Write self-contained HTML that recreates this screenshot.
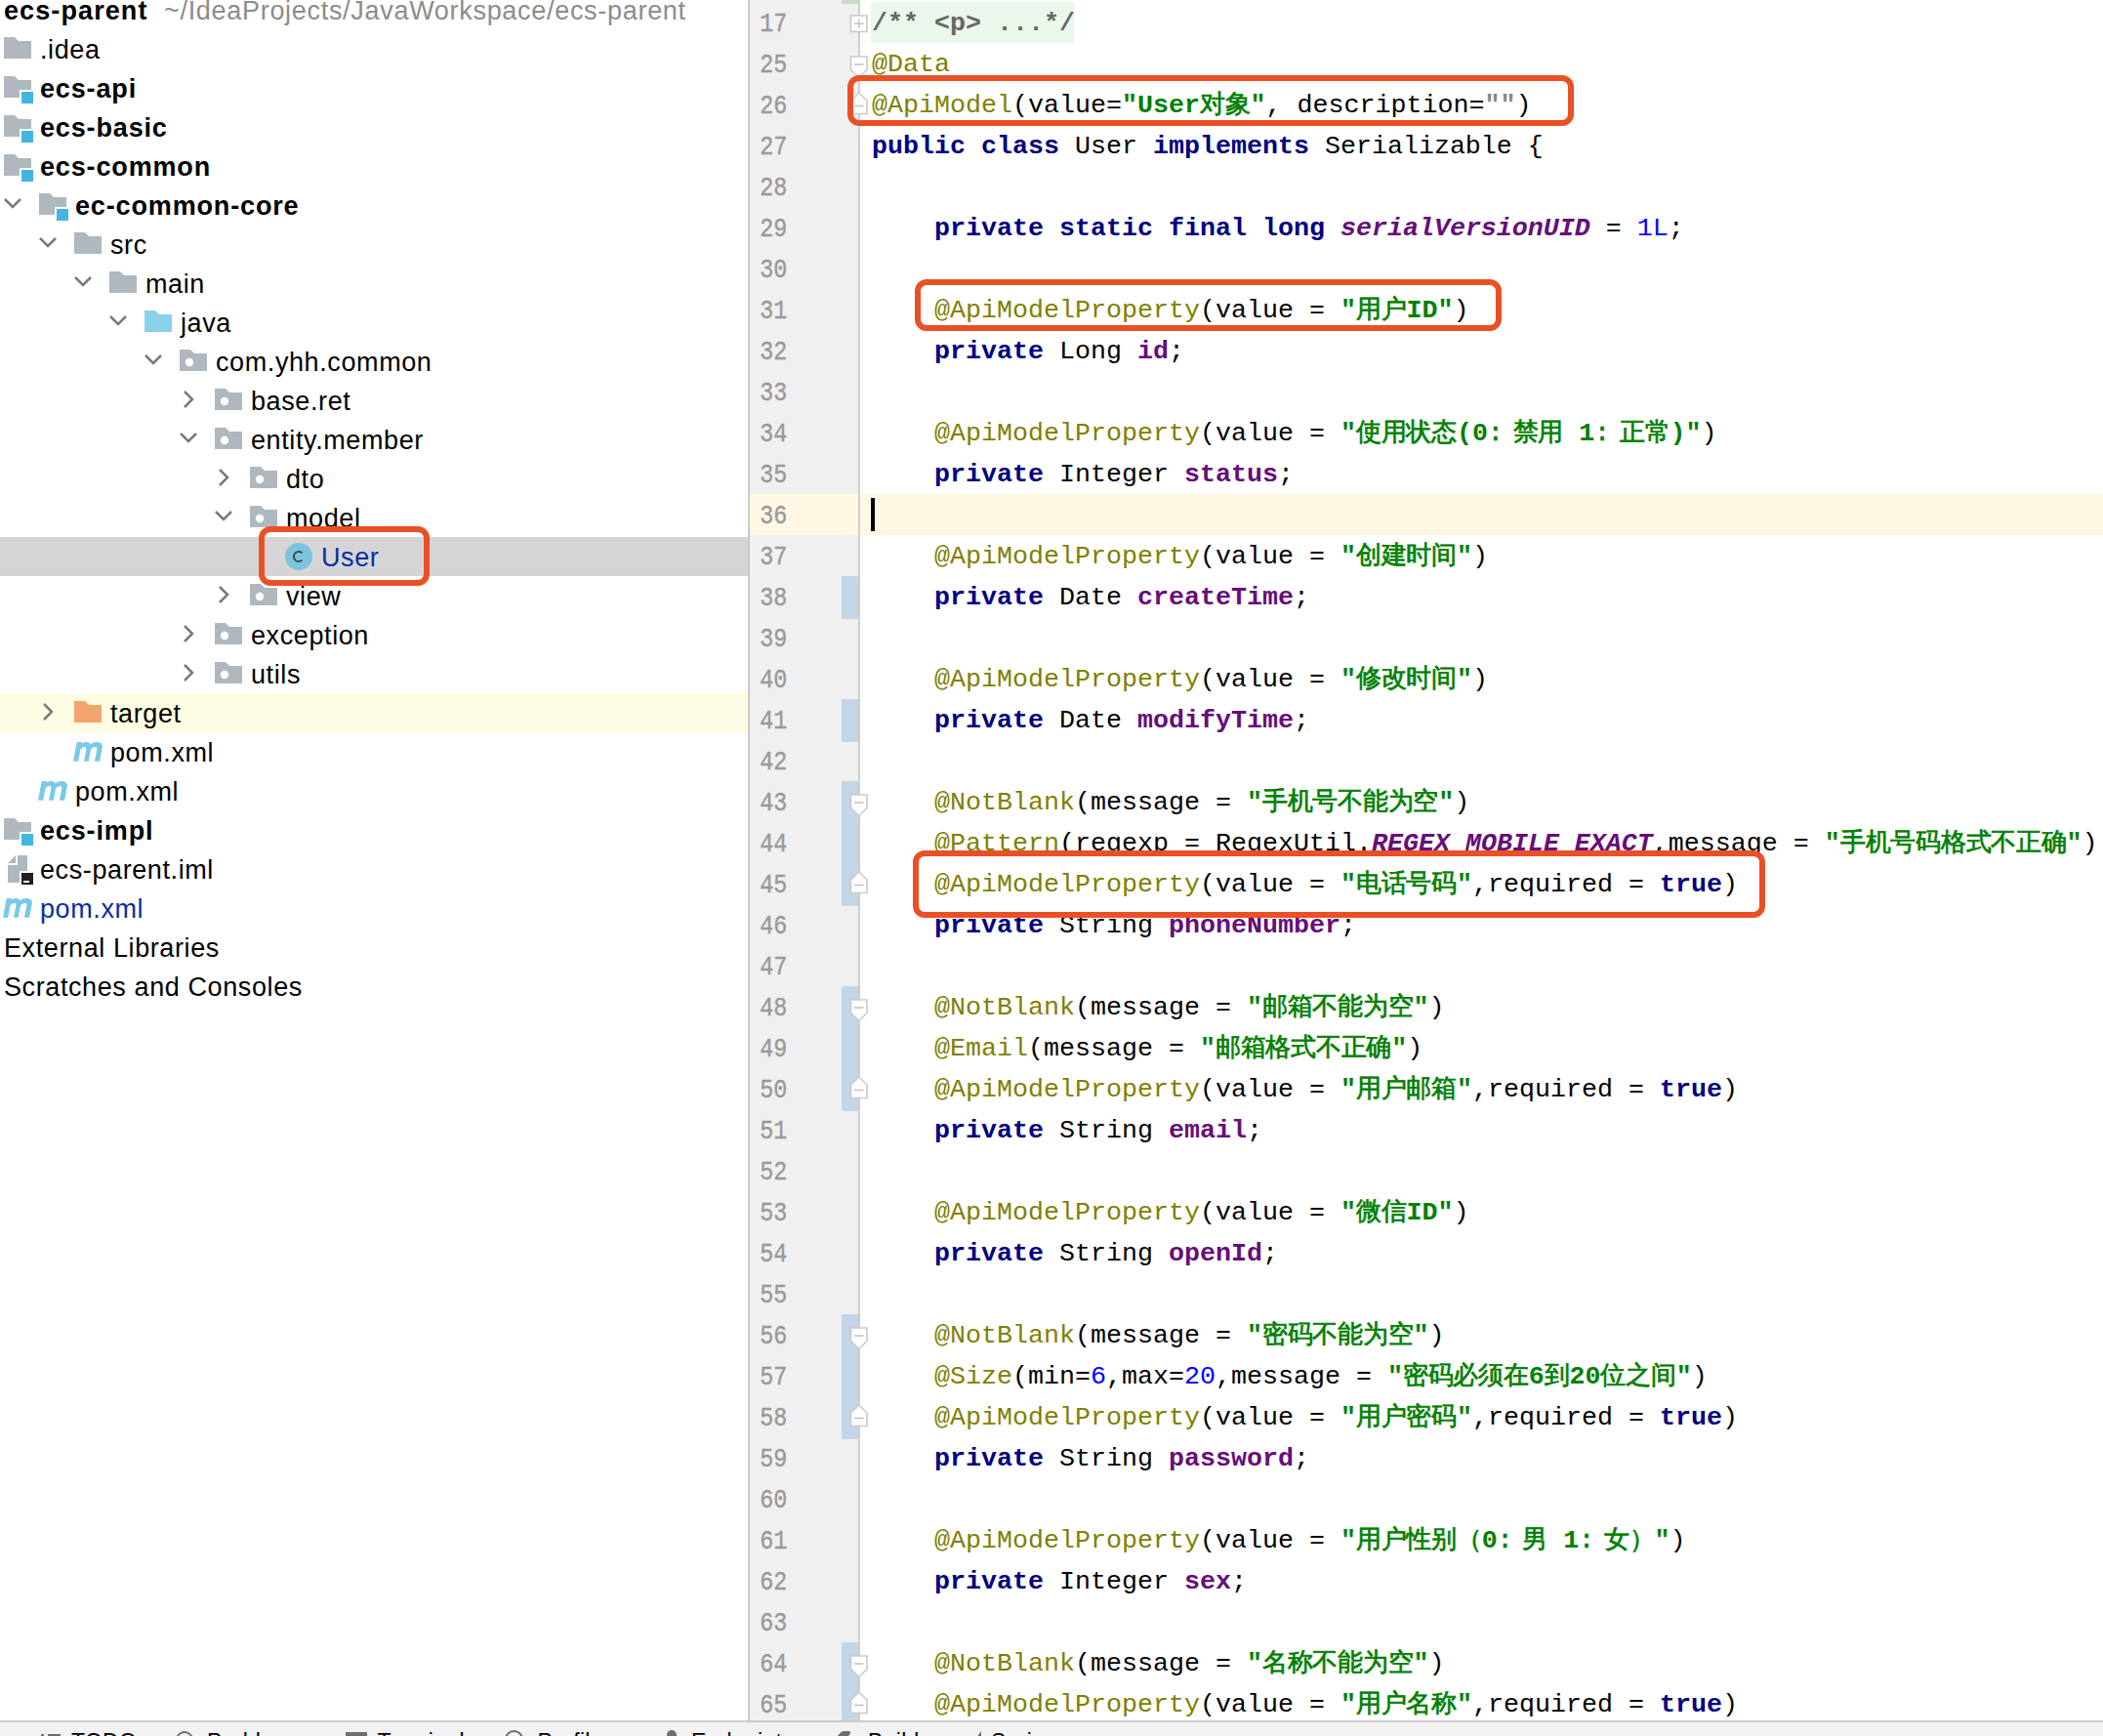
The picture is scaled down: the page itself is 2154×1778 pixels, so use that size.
<!DOCTYPE html>
<html><head><meta charset="utf-8"><title>IDE</title><style>
*{margin:0;padding:0;box-sizing:border-box}
html,body{width:2154px;height:1778px;overflow:hidden;background:#ffffff}
body{position:relative;font-family:"Liberation Sans",sans-serif}
.ic{position:absolute;overflow:visible}
.tt{position:absolute;height:40px;line-height:40px;font-size:27px;letter-spacing:0.6px;color:#000;white-space:pre}
.bb{font-weight:bold;letter-spacing:0.85px}
.tt .bb{letter-spacing:0.85px}
.ub{color:#0a2ea3}
.path{color:#8c8c8c;letter-spacing:0.7px}
.sel{position:absolute;left:0;width:766px;height:40px;background:#d5d5d5}
.ylw{position:absolute;left:0;width:766px;height:40px;background:#fefde3}
.mvn{position:absolute;width:34px;height:40px;font-family:"Liberation Sans",sans-serif;font-weight:bold;font-style:italic;font-size:40px;line-height:40px;color:#7bc9e6;letter-spacing:-1px}
#div1{position:absolute;left:766px;top:0;width:2px;height:1762px;background:#cacaca}
#gutter{position:absolute;left:768px;top:0;width:111px;height:1762px;background:#f0f0f0}
#div2{position:absolute;left:879px;top:0;width:2px;height:1762px;background:#cfcfcf}
.ln{position:absolute;left:768px;width:38.3px;-webkit-text-stroke:0.35px #999999;height:42px;line-height:42px;text-align:right;font-family:"Liberation Mono",monospace;font-size:23.33px;color:#999999;transform:translateY(3px) scaleY(1.16);transform-origin:50% 28px}
.curg{position:absolute;left:768px;width:111px;height:42px;background:#fef8e5}
.curc{position:absolute;left:881px;width:1273px;height:42px;background:#fef8e5}
.cl{position:absolute;left:893px;height:42px;line-height:44px;font-family:"Liberation Mono",monospace;font-size:26.67px;color:#000;white-space:pre}
.cj{font-size:26px;letter-spacing:-0.25px;font-weight:normal;-webkit-text-stroke:0.7px currentColor}
.fc{display:inline-block;width:25.75px;text-align:left}
.k{color:#000080;font-weight:bold}
.a{color:#808000}
.s{color:#008000;font-weight:bold}
.f{color:#660e7a;font-weight:bold}
.fi{color:#660e7a;font-weight:bold;font-style:italic}
.n{color:#0000ff}
.p{color:#000}
.q{color:#868686;font-weight:bold}
.c{color:#676767;font-weight:bold}
.chg{position:absolute;left:862px;width:17px;background:#c3d6e8}
.grn{background:#c9dfc4}
.fold{position:absolute;left:870px;overflow:visible}
.cmtbg{position:absolute;left:892px;top:2px;width:208px;height:42px;background:#eaf7ea}
.caret{position:absolute;left:892px;top:510px;width:4px;height:34px;background:#000}
.rb{position:absolute;border:6px solid #ea5026;border-radius:12px}
#bar{position:absolute;left:0;top:1762px;width:2154px;height:16px;background:#f2f2f2;border-top:2px solid #cbcbcb;overflow:hidden}
.btxt{position:absolute;top:4.8px;font-size:23px;line-height:30px;color:#000;white-space:pre;letter-spacing:0.3px}
.bicon{position:absolute;border:2.6px solid #6e6e6e;border-radius:50%}
</style></head>
<body>
<div class="tt" style="left:4px;top:-9px"><b class="bb" style="letter-spacing:1.1px">ecs-parent</b><span class="path">  ~/IdeaProjects/JavaWorkspace/ecs-parent</span></div><svg class="ic" style="left:4px;top:38px" width="32" height="26" viewBox="0 0 32 26"><path d="M0 0 H11 L15 4 H28 V22 H0 Z" fill="#afb8bf"/></svg><div class="tt" style="left:41px;top:31px">.idea</div><svg class="ic" style="left:4px;top:78px" width="32" height="26" viewBox="0 0 32 26"><path d="M0 0 H11 L15 4 H28 V14 H16 V22 H0 Z" fill="#afb8bf"/><rect x="18" y="16" width="12" height="12" fill="#40b6e0"/></svg><div class="tt bb" style="left:41px;top:71px">ecs-api</div><svg class="ic" style="left:4px;top:118px" width="32" height="26" viewBox="0 0 32 26"><path d="M0 0 H11 L15 4 H28 V14 H16 V22 H0 Z" fill="#afb8bf"/><rect x="18" y="16" width="12" height="12" fill="#40b6e0"/></svg><div class="tt bb" style="left:41px;top:111px">ecs-basic</div><svg class="ic" style="left:4px;top:158px" width="32" height="26" viewBox="0 0 32 26"><path d="M0 0 H11 L15 4 H28 V14 H16 V22 H0 Z" fill="#afb8bf"/><rect x="18" y="16" width="12" height="12" fill="#40b6e0"/></svg><div class="tt bb" style="left:41px;top:151px">ecs-common</div><svg class="ic" style="left:3.3px;top:202.3px" width="20" height="14" viewBox="0 0 20 14"><path d="M2 2 L10 10 L18 2" fill="none" stroke="#7a7a7a" stroke-width="2.5"/></svg><svg class="ic" style="left:40px;top:198px" width="32" height="26" viewBox="0 0 32 26"><path d="M0 0 H11 L15 4 H28 V14 H16 V22 H0 Z" fill="#afb8bf"/><rect x="18" y="16" width="12" height="12" fill="#40b6e0"/></svg><div class="tt bb" style="left:77px;top:191px">ec-common-core</div><svg class="ic" style="left:39.3px;top:242.3px" width="20" height="14" viewBox="0 0 20 14"><path d="M2 2 L10 10 L18 2" fill="none" stroke="#7a7a7a" stroke-width="2.5"/></svg><svg class="ic" style="left:76px;top:238px" width="32" height="26" viewBox="0 0 32 26"><path d="M0 0 H11 L15 4 H28 V22 H0 Z" fill="#afb8bf"/></svg><div class="tt" style="left:113px;top:231px">src</div><svg class="ic" style="left:75.3px;top:282.3px" width="20" height="14" viewBox="0 0 20 14"><path d="M2 2 L10 10 L18 2" fill="none" stroke="#7a7a7a" stroke-width="2.5"/></svg><svg class="ic" style="left:112px;top:278px" width="32" height="26" viewBox="0 0 32 26"><path d="M0 0 H11 L15 4 H28 V22 H0 Z" fill="#afb8bf"/></svg><div class="tt" style="left:149px;top:271px">main</div><svg class="ic" style="left:111.3px;top:322.3px" width="20" height="14" viewBox="0 0 20 14"><path d="M2 2 L10 10 L18 2" fill="none" stroke="#7a7a7a" stroke-width="2.5"/></svg><svg class="ic" style="left:148px;top:318px" width="32" height="26" viewBox="0 0 32 26"><path d="M0 0 H11 L15 4 H28 V22 H0 Z" fill="#8ad1eb"/></svg><div class="tt" style="left:185px;top:311px">java</div><svg class="ic" style="left:147.3px;top:362.3px" width="20" height="14" viewBox="0 0 20 14"><path d="M2 2 L10 10 L18 2" fill="none" stroke="#7a7a7a" stroke-width="2.5"/></svg><svg class="ic" style="left:184px;top:358px" width="32" height="26" viewBox="0 0 32 26"><path d="M0 0 H11 L15 4 H28 V22 H0 Z" fill="#afb8bf"/><circle cx="10" cy="13" r="4.2" fill="#ffffff"/></svg><div class="tt" style="left:221px;top:351px">com.yhh.common</div><svg class="ic" style="left:186.5px;top:399px" width="14" height="20" viewBox="0 0 14 20"><path d="M2 2 L10 10 L2 18" fill="none" stroke="#7a7a7a" stroke-width="2.5"/></svg><svg class="ic" style="left:220px;top:398px" width="32" height="26" viewBox="0 0 32 26"><path d="M0 0 H11 L15 4 H28 V22 H0 Z" fill="#afb8bf"/><circle cx="10" cy="13" r="4.2" fill="#ffffff"/></svg><div class="tt" style="left:257px;top:391px">base.ret</div><svg class="ic" style="left:183.3px;top:442.3px" width="20" height="14" viewBox="0 0 20 14"><path d="M2 2 L10 10 L18 2" fill="none" stroke="#7a7a7a" stroke-width="2.5"/></svg><svg class="ic" style="left:220px;top:438px" width="32" height="26" viewBox="0 0 32 26"><path d="M0 0 H11 L15 4 H28 V22 H0 Z" fill="#afb8bf"/><circle cx="10" cy="13" r="4.2" fill="#ffffff"/></svg><div class="tt" style="left:257px;top:431px">entity.member</div><svg class="ic" style="left:222.5px;top:479px" width="14" height="20" viewBox="0 0 14 20"><path d="M2 2 L10 10 L2 18" fill="none" stroke="#7a7a7a" stroke-width="2.5"/></svg><svg class="ic" style="left:256px;top:478px" width="32" height="26" viewBox="0 0 32 26"><path d="M0 0 H11 L15 4 H28 V22 H0 Z" fill="#afb8bf"/><circle cx="10" cy="13" r="4.2" fill="#ffffff"/></svg><div class="tt" style="left:293px;top:471px">dto</div><svg class="ic" style="left:219.3px;top:522.3px" width="20" height="14" viewBox="0 0 20 14"><path d="M2 2 L10 10 L18 2" fill="none" stroke="#7a7a7a" stroke-width="2.5"/></svg><svg class="ic" style="left:256px;top:518px" width="32" height="26" viewBox="0 0 32 26"><path d="M0 0 H11 L15 4 H28 V22 H0 Z" fill="#afb8bf"/><circle cx="10" cy="13" r="4.2" fill="#ffffff"/></svg><div class="tt" style="left:293px;top:511px">model</div><div class="sel" style="top:550px"></div><svg class="ic" style="left:292px;top:556px" width="28" height="28" viewBox="0 0 28 28"><circle cx="14" cy="14" r="14" fill="#7cc4dc"/><path d="M17.6 10.4 A5.1 5.1 0 1 0 17.6 17.6" fill="none" stroke="#3d4a52" stroke-width="2"/></svg><div class="tt ub" style="left:329px;top:551px">User</div><svg class="ic" style="left:222.5px;top:599px" width="14" height="20" viewBox="0 0 14 20"><path d="M2 2 L10 10 L2 18" fill="none" stroke="#7a7a7a" stroke-width="2.5"/></svg><svg class="ic" style="left:256px;top:598px" width="32" height="26" viewBox="0 0 32 26"><path d="M0 0 H11 L15 4 H28 V22 H0 Z" fill="#afb8bf"/><circle cx="10" cy="13" r="4.2" fill="#ffffff"/></svg><div class="tt" style="left:293px;top:591px">view</div><svg class="ic" style="left:186.5px;top:639px" width="14" height="20" viewBox="0 0 14 20"><path d="M2 2 L10 10 L2 18" fill="none" stroke="#7a7a7a" stroke-width="2.5"/></svg><svg class="ic" style="left:220px;top:638px" width="32" height="26" viewBox="0 0 32 26"><path d="M0 0 H11 L15 4 H28 V22 H0 Z" fill="#afb8bf"/><circle cx="10" cy="13" r="4.2" fill="#ffffff"/></svg><div class="tt" style="left:257px;top:631px">exception</div><svg class="ic" style="left:186.5px;top:679px" width="14" height="20" viewBox="0 0 14 20"><path d="M2 2 L10 10 L2 18" fill="none" stroke="#7a7a7a" stroke-width="2.5"/></svg><svg class="ic" style="left:220px;top:678px" width="32" height="26" viewBox="0 0 32 26"><path d="M0 0 H11 L15 4 H28 V22 H0 Z" fill="#afb8bf"/><circle cx="10" cy="13" r="4.2" fill="#ffffff"/></svg><div class="tt" style="left:257px;top:671px">utils</div><div class="ylw" style="top:710px"></div><svg class="ic" style="left:42.5px;top:719px" width="14" height="20" viewBox="0 0 14 20"><path d="M2 2 L10 10 L2 18" fill="none" stroke="#7a7a7a" stroke-width="2.5"/></svg><svg class="ic" style="left:76px;top:718px" width="32" height="26" viewBox="0 0 32 26"><path d="M0 0 H11 L15 4 H28 V22 H0 Z" fill="#f5a470"/></svg><div class="tt" style="left:113px;top:711px">target</div><svg class="ic" style="left:74px;top:760px" width="34" height="22" viewBox="0 0 34 22"><path transform="skewX(-10.8)" fill="#79c9e8" d="M4.75 0 H9.9 V1.6 C11 0.5 12.6 0 14.5 0 C16.8 0 18.3 0.9 19.2 2.6 C20.4 0.9 22.3 0 24.6 0 C28.4 0 31.85 1.5 31.85 5.5 V19.7 H26.65 V7.2 C26.65 5.6 25.9 4.9 24.6 4.9 C23.2 4.9 22.1 5.6 20.45 7.2 V19.7 H15.75 V7.2 C15.75 5.6 15 4.9 13.7 4.9 C12.3 4.9 11.3 5.6 9.9 7.2 V19.7 H4.75 Z"/></svg><div class="tt" style="left:113px;top:751px">pom.xml</div><svg class="ic" style="left:38px;top:800px" width="34" height="22" viewBox="0 0 34 22"><path transform="skewX(-10.8)" fill="#79c9e8" d="M4.75 0 H9.9 V1.6 C11 0.5 12.6 0 14.5 0 C16.8 0 18.3 0.9 19.2 2.6 C20.4 0.9 22.3 0 24.6 0 C28.4 0 31.85 1.5 31.85 5.5 V19.7 H26.65 V7.2 C26.65 5.6 25.9 4.9 24.6 4.9 C23.2 4.9 22.1 5.6 20.45 7.2 V19.7 H15.75 V7.2 C15.75 5.6 15 4.9 13.7 4.9 C12.3 4.9 11.3 5.6 9.9 7.2 V19.7 H4.75 Z"/></svg><div class="tt" style="left:77px;top:791px">pom.xml</div><svg class="ic" style="left:4px;top:838px" width="32" height="26" viewBox="0 0 32 26"><path d="M0 0 H11 L15 4 H28 V14 H16 V22 H0 Z" fill="#afb8bf"/><rect x="18" y="16" width="12" height="12" fill="#40b6e0"/></svg><div class="tt bb" style="left:41px;top:831px">ecs-impl</div><svg class="ic" style="left:8px;top:876px" width="28" height="32" viewBox="0 0 28 32"><path d="M0 8 L8 0 V8 Z" fill="#afb8bf"/><path d="M10 0 H20 V16 H12 V28 H0 V10 H10 Z" fill="#afb8bf"/><rect x="14" y="18" width="12" height="12" fill="#231f20"/><rect x="16" y="26" width="6" height="2" fill="#ffffff"/></svg><div class="tt" style="left:41px;top:871px">ecs-parent.iml</div><svg class="ic" style="left:2px;top:920px" width="34" height="22" viewBox="0 0 34 22"><path transform="skewX(-10.8)" fill="#79c9e8" d="M4.75 0 H9.9 V1.6 C11 0.5 12.6 0 14.5 0 C16.8 0 18.3 0.9 19.2 2.6 C20.4 0.9 22.3 0 24.6 0 C28.4 0 31.85 1.5 31.85 5.5 V19.7 H26.65 V7.2 C26.65 5.6 25.9 4.9 24.6 4.9 C23.2 4.9 22.1 5.6 20.45 7.2 V19.7 H15.75 V7.2 C15.75 5.6 15 4.9 13.7 4.9 C12.3 4.9 11.3 5.6 9.9 7.2 V19.7 H4.75 Z"/></svg><div class="tt ub" style="left:41px;top:911px">pom.xml</div><div class="tt" style="left:4px;top:951px">External Libraries</div><div class="tt" style="left:4px;top:991px">Scratches and Consoles</div>
<div id="div1"></div>
<div id="gutter"></div>
<div class="curg" style="top:506px"></div>
<div class="curc" style="top:506px"></div>
<div class="cmtbg"></div>
<div class="chg" style="top:590px;height:43.5px"></div><div class="chg" style="top:716px;height:43.5px"></div><div class="chg" style="top:800px;height:127.5px"></div><div class="chg" style="top:1010px;height:127.5px"></div><div class="chg" style="top:1346px;height:127.5px"></div><div class="chg" style="top:1682px;height:85.5px"></div><div class="chg grn" style="top:0px;height:4px"></div>
<div id="div2"></div>
<div class="ln" style="top:2px">17</div><div class="ln" style="top:44px">25</div><div class="ln" style="top:86px">26</div><div class="ln" style="top:128px">27</div><div class="ln" style="top:170px">28</div><div class="ln" style="top:212px">29</div><div class="ln" style="top:254px">30</div><div class="ln" style="top:296px">31</div><div class="ln" style="top:338px">32</div><div class="ln" style="top:380px">33</div><div class="ln" style="top:422px">34</div><div class="ln" style="top:464px">35</div><div class="ln cur" style="top:506px">36</div><div class="ln" style="top:548px">37</div><div class="ln" style="top:590px">38</div><div class="ln" style="top:632px">39</div><div class="ln" style="top:674px">40</div><div class="ln" style="top:716px">41</div><div class="ln" style="top:758px">42</div><div class="ln" style="top:800px">43</div><div class="ln" style="top:842px">44</div><div class="ln" style="top:884px">45</div><div class="ln" style="top:926px">46</div><div class="ln" style="top:968px">47</div><div class="ln" style="top:1010px">48</div><div class="ln" style="top:1052px">49</div><div class="ln" style="top:1094px">50</div><div class="ln" style="top:1136px">51</div><div class="ln" style="top:1178px">52</div><div class="ln" style="top:1220px">53</div><div class="ln" style="top:1262px">54</div><div class="ln" style="top:1304px">55</div><div class="ln" style="top:1346px">56</div><div class="ln" style="top:1388px">57</div><div class="ln" style="top:1430px">58</div><div class="ln" style="top:1472px">59</div><div class="ln" style="top:1514px">60</div><div class="ln" style="top:1556px">61</div><div class="ln" style="top:1598px">62</div><div class="ln" style="top:1640px">63</div><div class="ln" style="top:1682px">64</div><div class="ln" style="top:1724px">65</div>
<div class="cl" style="top:2px"><span class="c">/** &lt;p&gt; ...*/</span></div><div class="cl" style="top:44px"><span class="a">@Data</span></div><div class="cl" style="top:86px"><span class="a">@ApiModel</span><span class="p">(value=</span><span class="s">&quot;User<span class="cj">对象</span>&quot;</span><span class="p">, description=</span><span class="q">&quot;&quot;</span><span class="p">)</span></div><div class="cl" style="top:128px"><span class="k">public class </span><span class="p">User </span><span class="k">implements </span><span class="p">Serializable {</span></div><div class="cl" style="top:170px"></div><div class="cl" style="top:212px"><span class="p">    </span><span class="k">private static final long </span><span class="fi">serialVersionUID</span><span class="p"> = </span><span class="n">1L</span><span class="p">;</span></div><div class="cl" style="top:254px"></div><div class="cl" style="top:296px"><span class="p">    </span><span class="a">@ApiModelProperty</span><span class="p">(value = </span><span class="s">&quot;<span class="cj">用户</span>ID&quot;</span><span class="p">)</span></div><div class="cl" style="top:338px"><span class="p">    </span><span class="k">private </span><span class="p">Long </span><span class="f">id</span><span class="p">;</span></div><div class="cl" style="top:380px"></div><div class="cl" style="top:422px"><span class="p">    </span><span class="a">@ApiModelProperty</span><span class="p">(value = </span><span class="s">&quot;<span class="cj">使用状态</span>(0<span class="cj"><span class="fc">:</span>禁用</span> 1<span class="cj"><span class="fc">:</span>正常</span>)&quot;</span><span class="p">)</span></div><div class="cl" style="top:464px"><span class="p">    </span><span class="k">private </span><span class="p">Integer </span><span class="f">status</span><span class="p">;</span></div><div class="cl cur" style="top:506px"></div><div class="cl" style="top:548px"><span class="p">    </span><span class="a">@ApiModelProperty</span><span class="p">(value = </span><span class="s">&quot;<span class="cj">创建时间</span>&quot;</span><span class="p">)</span></div><div class="cl" style="top:590px"><span class="p">    </span><span class="k">private </span><span class="p">Date </span><span class="f">createTime</span><span class="p">;</span></div><div class="cl" style="top:632px"></div><div class="cl" style="top:674px"><span class="p">    </span><span class="a">@ApiModelProperty</span><span class="p">(value = </span><span class="s">&quot;<span class="cj">修改时间</span>&quot;</span><span class="p">)</span></div><div class="cl" style="top:716px"><span class="p">    </span><span class="k">private </span><span class="p">Date </span><span class="f">modifyTime</span><span class="p">;</span></div><div class="cl" style="top:758px"></div><div class="cl" style="top:800px"><span class="p">    </span><span class="a">@NotBlank</span><span class="p">(message = </span><span class="s">&quot;<span class="cj">手机号不能为空</span>&quot;</span><span class="p">)</span></div><div class="cl" style="top:842px"><span class="p">    </span><span class="a">@Pattern</span><span class="p">(regexp = RegexUtil.</span><span class="fi">REGEX_MOBILE_EXACT</span><span class="p">,message = </span><span class="s">&quot;<span class="cj">手机号码格式不正确</span>&quot;</span><span class="p">)</span></div><div class="cl" style="top:884px"><span class="p">    </span><span class="a">@ApiModelProperty</span><span class="p">(value = </span><span class="s">&quot;<span class="cj">电话号码</span>&quot;</span><span class="p">,required = </span><span class="k">true</span><span class="p">)</span></div><div class="cl" style="top:926px"><span class="p">    </span><span class="k">private </span><span class="p">String </span><span class="f">phoneNumber</span><span class="p">;</span></div><div class="cl" style="top:968px"></div><div class="cl" style="top:1010px"><span class="p">    </span><span class="a">@NotBlank</span><span class="p">(message = </span><span class="s">&quot;<span class="cj">邮箱不能为空</span>&quot;</span><span class="p">)</span></div><div class="cl" style="top:1052px"><span class="p">    </span><span class="a">@Email</span><span class="p">(message = </span><span class="s">&quot;<span class="cj">邮箱格式不正确</span>&quot;</span><span class="p">)</span></div><div class="cl" style="top:1094px"><span class="p">    </span><span class="a">@ApiModelProperty</span><span class="p">(value = </span><span class="s">&quot;<span class="cj">用户邮箱</span>&quot;</span><span class="p">,required = </span><span class="k">true</span><span class="p">)</span></div><div class="cl" style="top:1136px"><span class="p">    </span><span class="k">private </span><span class="p">String </span><span class="f">email</span><span class="p">;</span></div><div class="cl" style="top:1178px"></div><div class="cl" style="top:1220px"><span class="p">    </span><span class="a">@ApiModelProperty</span><span class="p">(value = </span><span class="s">&quot;<span class="cj">微信</span>ID&quot;</span><span class="p">)</span></div><div class="cl" style="top:1262px"><span class="p">    </span><span class="k">private </span><span class="p">String </span><span class="f">openId</span><span class="p">;</span></div><div class="cl" style="top:1304px"></div><div class="cl" style="top:1346px"><span class="p">    </span><span class="a">@NotBlank</span><span class="p">(message = </span><span class="s">&quot;<span class="cj">密码不能为空</span>&quot;</span><span class="p">)</span></div><div class="cl" style="top:1388px"><span class="p">    </span><span class="a">@Size</span><span class="p">(min=</span><span class="n">6</span><span class="p">,max=</span><span class="n">20</span><span class="p">,message = </span><span class="s">&quot;<span class="cj">密码必须在</span>6<span class="cj">到</span>20<span class="cj">位之间</span>&quot;</span><span class="p">)</span></div><div class="cl" style="top:1430px"><span class="p">    </span><span class="a">@ApiModelProperty</span><span class="p">(value = </span><span class="s">&quot;<span class="cj">用户密码</span>&quot;</span><span class="p">,required = </span><span class="k">true</span><span class="p">)</span></div><div class="cl" style="top:1472px"><span class="p">    </span><span class="k">private </span><span class="p">String </span><span class="f">password</span><span class="p">;</span></div><div class="cl" style="top:1514px"></div><div class="cl" style="top:1556px"><span class="p">    </span><span class="a">@ApiModelProperty</span><span class="p">(value = </span><span class="s">&quot;<span class="cj">用户性别（</span>0<span class="cj"><span class="fc">:</span>男</span> 1<span class="cj"><span class="fc">:</span>女）</span>&quot;</span><span class="p">)</span></div><div class="cl" style="top:1598px"><span class="p">    </span><span class="k">private </span><span class="p">Integer </span><span class="f">sex</span><span class="p">;</span></div><div class="cl" style="top:1640px"></div><div class="cl" style="top:1682px"><span class="p">    </span><span class="a">@NotBlank</span><span class="p">(message = </span><span class="s">&quot;<span class="cj">名称不能为空</span>&quot;</span><span class="p">)</span></div><div class="cl" style="top:1724px"><span class="p">    </span><span class="a">@ApiModelProperty</span><span class="p">(value = </span><span class="s">&quot;<span class="cj">用户名称</span>&quot;</span><span class="p">,required = </span><span class="k">true</span><span class="p">)</span></div>
<svg class="fold" style="top:15px" width="20" height="20" viewBox="0 0 20 20"><rect x="1.5" y="1" width="16.5" height="16.5" fill="#ffffff" stroke="#cacaca" stroke-width="1.6"/><path d="M5 9.25 H14.5 M9.75 4.5 V14" stroke="#c4c4c4" stroke-width="1.6"/></svg><svg class="fold" style="top:56.5px" width="20" height="24" viewBox="0 0 20 24"><path d="M1.5 1 H18 V14.5 L9.75 22.5 L1.5 14.5 Z" fill="#ffffff" stroke="#cacaca" stroke-width="1.6"/><path d="M5 9 H14.5" stroke="#c4c4c4" stroke-width="1.6"/></svg><svg class="fold" style="top:94px" width="20" height="24" viewBox="0 0 20 24"><path d="M1.5 22.5 H18 V9 L9.75 1 L1.5 9 Z" fill="#ffffff" stroke="#cacaca" stroke-width="1.6"/><path d="M5 14.5 H14.5" stroke="#c4c4c4" stroke-width="1.6"/></svg><svg class="fold" style="top:812.5px" width="20" height="24" viewBox="0 0 20 24"><path d="M1.5 1 H18 V14.5 L9.75 22.5 L1.5 14.5 Z" fill="#ffffff" stroke="#cacaca" stroke-width="1.6"/><path d="M5 9 H14.5" stroke="#c4c4c4" stroke-width="1.6"/></svg><svg class="fold" style="top:892px" width="20" height="24" viewBox="0 0 20 24"><path d="M1.5 22.5 H18 V9 L9.75 1 L1.5 9 Z" fill="#ffffff" stroke="#cacaca" stroke-width="1.6"/><path d="M5 14.5 H14.5" stroke="#c4c4c4" stroke-width="1.6"/></svg><svg class="fold" style="top:1022.5px" width="20" height="24" viewBox="0 0 20 24"><path d="M1.5 1 H18 V14.5 L9.75 22.5 L1.5 14.5 Z" fill="#ffffff" stroke="#cacaca" stroke-width="1.6"/><path d="M5 9 H14.5" stroke="#c4c4c4" stroke-width="1.6"/></svg><svg class="fold" style="top:1102px" width="20" height="24" viewBox="0 0 20 24"><path d="M1.5 22.5 H18 V9 L9.75 1 L1.5 9 Z" fill="#ffffff" stroke="#cacaca" stroke-width="1.6"/><path d="M5 14.5 H14.5" stroke="#c4c4c4" stroke-width="1.6"/></svg><svg class="fold" style="top:1358.5px" width="20" height="24" viewBox="0 0 20 24"><path d="M1.5 1 H18 V14.5 L9.75 22.5 L1.5 14.5 Z" fill="#ffffff" stroke="#cacaca" stroke-width="1.6"/><path d="M5 9 H14.5" stroke="#c4c4c4" stroke-width="1.6"/></svg><svg class="fold" style="top:1438px" width="20" height="24" viewBox="0 0 20 24"><path d="M1.5 22.5 H18 V9 L9.75 1 L1.5 9 Z" fill="#ffffff" stroke="#cacaca" stroke-width="1.6"/><path d="M5 14.5 H14.5" stroke="#c4c4c4" stroke-width="1.6"/></svg><svg class="fold" style="top:1694.5px" width="20" height="24" viewBox="0 0 20 24"><path d="M1.5 1 H18 V14.5 L9.75 22.5 L1.5 14.5 Z" fill="#ffffff" stroke="#cacaca" stroke-width="1.6"/><path d="M5 9 H14.5" stroke="#c4c4c4" stroke-width="1.6"/></svg><svg class="fold" style="top:1732px" width="20" height="24" viewBox="0 0 20 24"><path d="M1.5 22.5 H18 V9 L9.75 1 L1.5 9 Z" fill="#ffffff" stroke="#cacaca" stroke-width="1.6"/><path d="M5 14.5 H14.5" stroke="#c4c4c4" stroke-width="1.6"/></svg>
<div class="caret"></div>
<div class="rb" style="left:868px;top:77px;width:744px;height:52px"></div><div class="rb" style="left:937px;top:286px;width:601px;height:53px"></div><div class="rb" style="left:934.5px;top:870.5px;width:873.0px;height:69.5px"></div><div class="rb" style="left:265px;top:539px;width:175px;height:61px"></div>
<div id="bar"><div class="btxt" style="left:73px">TODO</div><div class="btxt" style="left:212px">Problems</div><div class="btxt" style="left:386.5px">Terminal</div><div class="btxt" style="left:550.5px">Profiler</div><div class="btxt" style="left:708px">Endpoints</div><div class="btxt" style="left:889px">Build</div><div class="btxt" style="left:1015px">Spring</div><div style="position:absolute;left:42px;top:12.3px;width:3.3px;height:10px;background:#6e6e6e"></div><div style="position:absolute;left:48.6px;top:12.3px;width:13.3px;height:3px;background:#6e6e6e"></div><div class="bicon" style="left:180px;top:8.8px;width:18px;height:18px"></div><div style="position:absolute;left:354px;top:10px;width:21.5px;height:14px;background:#6e6e6e"></div><div class="bicon" style="left:516.5px;top:8px;width:19.5px;height:19.5px"></div><div style="position:absolute;left:683px;top:8px;width:9.7px;height:9.7px;border-radius:5px;background:#6e6e6e"></div><div style="position:absolute;left:858px;top:8.8px;width:11px;height:10px;background:#6e6e6e;transform:skewX(-40deg);border-radius:2px 4px 0 0"></div><div style="position:absolute;left:997.5px;top:8.8px;width:0;height:0;border-left:7px solid transparent;border-bottom:10px solid #6e6e6e"></div></div>
</body></html>
